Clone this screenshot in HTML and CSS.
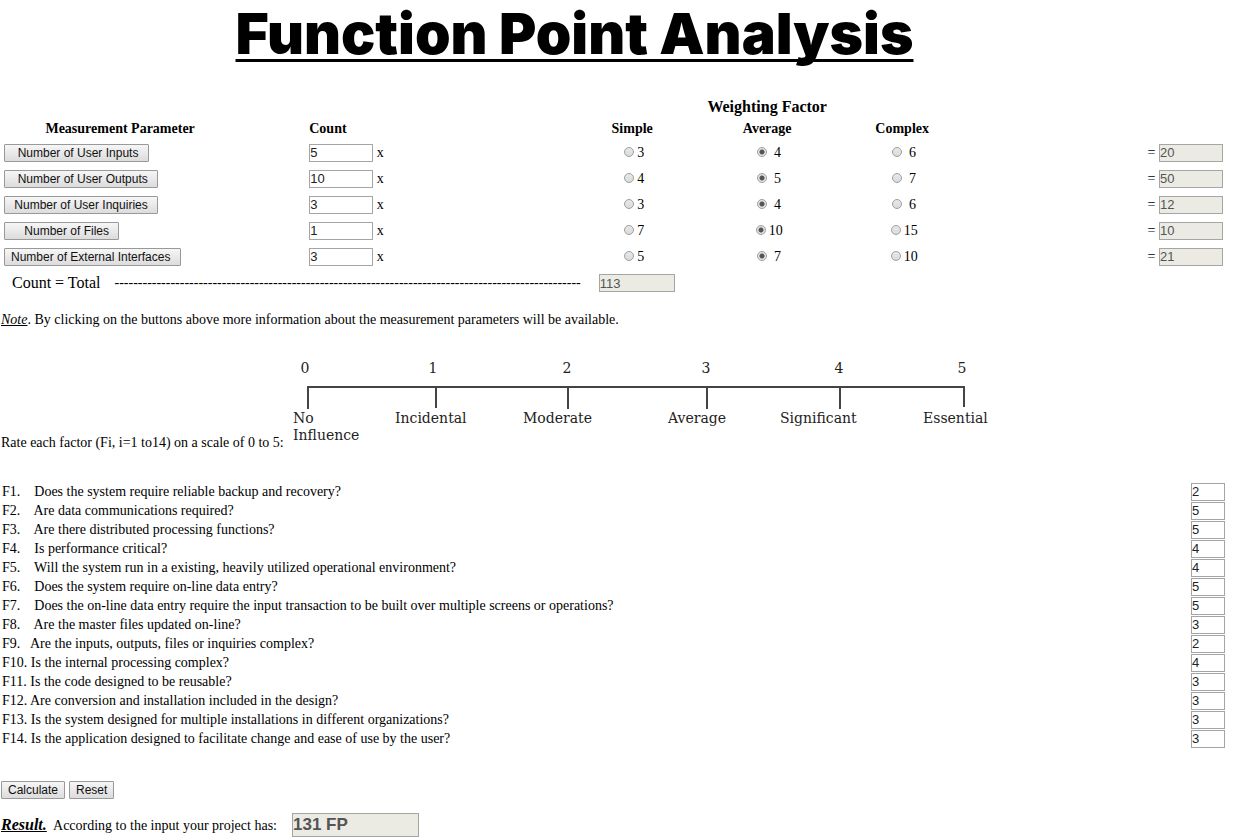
FILE: index.html
```html
<!DOCTYPE html>
<html lang="en">
<head>
<meta charset="utf-8">
<title>Function Point Analysis</title>
<link rel="stylesheet" href="styles.css">
</head>
<body>
<h1 class="title">Function Point Analysis</h1>
<form class="fpa">
<table class="weights">
<colgroup><col class="col-param"><col class="col-count"><col class="col-weight"><col class="col-weight"><col class="col-weight"><col class="col-result"></colgroup>
<thead>
<tr class="group"><td colspan="2"></td><th class="weight" colspan="3" scope="colgroup">Weighting Factor</th><td></td></tr>
<tr><th class="param-head" scope="col">Measurement Parameter</th><th class="count-head" scope="col">Count</th><th class="weight" scope="col">Simple</th><th class="weight" scope="col">Average</th><th class="weight" scope="col">Complex</th><td></td></tr>
</thead>
<tbody>
<tr><td><button type="button">&nbsp;&nbsp;Number of User Inputs&nbsp;</button></td><td class="count"><label><input class="field" type="text" value="5"> x</label></td>
<td class="weight"><label><input type="radio" name="w1">3</label></td><td class="weight"><label><input type="radio" name="w1" checked>&nbsp;4</label></td><td class="weight"><label><input type="radio" name="w1">&nbsp;6</label></td>
<td class="result"><label>= <input class="field" type="text" value="20" disabled></label></td></tr>
<tr><td><button type="button">&nbsp;&nbsp;Number of User Outputs&nbsp;</button></td><td class="count"><label><input class="field" type="text" value="10"> x</label></td>
<td class="weight"><label><input type="radio" name="w2">4</label></td><td class="weight"><label><input type="radio" name="w2" checked>&nbsp;5</label></td><td class="weight"><label><input type="radio" name="w2">&nbsp;7</label></td>
<td class="result"><label>= <input class="field" type="text" value="50" disabled></label></td></tr>
<tr><td><button type="button">&nbsp;Number of User Inquiries&nbsp;</button></td><td class="count"><label><input class="field" type="text" value="3"> x</label></td>
<td class="weight"><label><input type="radio" name="w3">3</label></td><td class="weight"><label><input type="radio" name="w3" checked>&nbsp;4</label></td><td class="weight"><label><input type="radio" name="w3">&nbsp;6</label></td>
<td class="result"><label>= <input class="field" type="text" value="12" disabled></label></td></tr>
<tr><td><button type="button">&nbsp;&nbsp;&nbsp;&nbsp;Number of Files&nbsp;</button></td><td class="count"><label><input class="field" type="text" value="1"> x</label></td>
<td class="weight"><label><input type="radio" name="w4">7</label></td><td class="weight"><label><input type="radio" name="w4" checked>10</label></td><td class="weight"><label><input type="radio" name="w4">15</label></td>
<td class="result"><label>= <input class="field" type="text" value="10" disabled></label></td></tr>
<tr><td><button type="button">Number of External Interfaces&nbsp;</button></td><td class="count"><label><input class="field" type="text" value="3"> x</label></td>
<td class="weight"><label><input type="radio" name="w5">5</label></td><td class="weight"><label><input type="radio" name="w5" checked>&nbsp;7</label></td><td class="weight"><label><input type="radio" name="w5">10</label></td>
<td class="result"><label>= <input class="field" type="text" value="21" disabled></label></td></tr>
</tbody>
</table>
<div class="total"><label for="total">Count = Total</label><span class="dashes">----------------------------------------------------------------------------------------------------</span><input class="field total-field" id="total" type="text" value="113" disabled></div>
<p class="note"><em>Note</em>. By clicking on the buttons above more information about the measurement parameters will be available.</p>
<div class="rate"><span>Rate each factor (Fi, i=1 to14) on a scale of 0 to 5:</span><svg class="scale" width="708" height="96" viewBox="0 0 708 96" role="img" aria-label="Influence scale from 0 to 5">
<path d="M15 37H673M16 36V59M144 37V58M276 37V59M415 37V59M548 37V59M672 37V57" fill="none" stroke="#444" stroke-width="2"/>
<g text-anchor="middle"><text x="13" y="23">0</text><text x="141" y="23">1</text><text x="275" y="23">2</text><text x="414" y="23">3</text><text x="547" y="23">4</text><text x="670" y="23">5</text></g>
<text x="1" y="73">No</text><text x="1" y="90">Influence</text><text x="103" y="73">Incidental</text><text x="231" y="73">Moderate</text><text x="376" y="73">Average</text><text x="488" y="73">Significant</text><text x="631" y="73">Essential</text>
</svg></div>
<div class="factors">
<label>F1.&nbsp;&nbsp;&nbsp; Does the system require reliable backup and recovery?<input class="field" type="text" value="2"></label>
<label>F2.&nbsp;&nbsp;&nbsp; Are data communications required?<input class="field" type="text" value="5"></label>
<label>F3.&nbsp;&nbsp;&nbsp; Are there distributed processing functions?<input class="field" type="text" value="5"></label>
<label>F4.&nbsp;&nbsp;&nbsp; Is performance critical?<input class="field" type="text" value="4"></label>
<label>F5.&nbsp;&nbsp;&nbsp; Will the system run in a existing, heavily utilized operational environment?<input class="field" type="text" value="4"></label>
<label>F6.&nbsp;&nbsp;&nbsp; Does the system require on-line data entry?<input class="field" type="text" value="5"></label>
<label>F7.&nbsp;&nbsp;&nbsp; Does the on-line data entry require the input transaction to be built over multiple screens or operations?<input class="field" type="text" value="5"></label>
<label>F8.&nbsp;&nbsp;&nbsp; Are the master files updated on-line?<input class="field" type="text" value="3"></label>
<label>F9.&nbsp;&nbsp; Are the inputs, outputs, files or inquiries complex?<input class="field" type="text" value="2"></label>
<label>F10. Is the internal processing complex?<input class="field" type="text" value="4"></label>
<label>F11. Is the code designed to be reusable?<input class="field" type="text" value="3"></label>
<label>F12. Are conversion and installation included in the design?<input class="field" type="text" value="3"></label>
<label>F13. Is the system designed for multiple installations in different organizations?<input class="field" type="text" value="3"></label>
<label>F14. Is the application designed to facilitate change and ease of use by the user?<input class="field" type="text" value="3"></label>
</div>
<div class="actions"><button type="button">Calculate</button><button type="reset">Reset</button></div>
<div class="outcome"><label for="outcome"><strong>Result.</strong>&nbsp; According to the input your project has:</label><input class="field outcome-field" id="outcome" type="text" value="131 FP" disabled></div>
</form>
</body>
</html>
```
FILE: styles.css
```css
* { box-sizing: border-box; }
body {
  margin: 0;
  background: #fff;
  color: #000;
  font: 14px/18px "Liberation Serif", "Times New Roman", serif;
}
.title {
  margin: 0;
  padding: 2px 84px 0 0;
  text-align: center;
  font: 900 57px/64px Inter, "Arial Black", sans-serif;
  text-decoration: underline;
  text-decoration-thickness: 3px;
  text-underline-offset: 5px;
  text-decoration-skip-ink: none;
}
.weights {
  width: 100%;
  margin-top: 30px;
  table-layout: fixed;
  border-collapse: collapse;
}
.col-param { width: 25%; }
.col-count { width: 21%; }
.col-weight { width: 135px; }
.weights td, .weights th { padding: 0; height: 22px; }
.weights .group th { font-size: 16px; }
.weights tbody td { height: 26px; white-space: nowrap; }
.weights td:first-child { padding-left: 4px; }
.weights .param-head { padding-right: 68px; }
.weights .count-head { text-align: left; padding-left: 1px; }
.weights .count { padding-left: 1px; }
.weights .weight { text-align: center; padding-right: 5px; }
.weights .result { text-align: right; padding-right: 10px; }
button {
  height: 18px;
  padding: 0 6px;
  border: 1px solid #999;
  border-radius: 1px;
  background: linear-gradient(#f6f6f6, #dcdcdc);
  color: #111;
  font: 12px/16px "Liberation Sans", Arial, sans-serif;
}
.field {
  width: 64px;
  height: 18px;
  padding: 0;
  border: 1px solid #a5a5a5;
  border-radius: 0;
  background: #fff;
  color: #222;
  font: 13px/16px "Liberation Sans", Arial, sans-serif;
}
.field:disabled { background: #ebebe4; color: #545454; }
input[type="radio"] {
  appearance: none;
  width: 10px;
  height: 10px;
  margin: 0 3px 0 4px;
  border: 1px solid #a0a0a0;
  border-radius: 50%;
  background: linear-gradient(#e8e8e8, #dadada);
}
input[type="radio"]:checked {
  background: radial-gradient(circle, #555 2px, #e2e2e2 3px);
}
.total {
  display: flex;
  align-items: center;
  padding-left: 12px;
  height: 26px;
  font-size: 16px;
}
.dashes { margin: 0 18px 0 14px; font-size: 14px; }
.total-field { width: 76px; }
.note { margin: 15px 0 0 1px; }
.note em { text-decoration: underline; }
.rate { display: flex; align-items: flex-end; gap: 8px; margin: 21px 0 0 1px; white-space: nowrap; }
.scale { flex: none; overflow: visible; margin-bottom: 6px; font: 14px "DejaVu Serif", serif; fill: #222; }
.factors { padding: 30px 8px 0 2px; }
.factors label { display: flex; justify-content: space-between; align-items: center; height: 19px; }
.factors .field { width: 34px; }
.actions { display: flex; gap: 4px; padding: 33px 0 0 1px; }
.outcome { display: flex; align-items: center; gap: 15px; padding: 14px 0 0 1px; }
.outcome strong { font-size: 16px; font-style: italic; text-decoration: underline; }
.outcome-field { width: 127px; height: 24px; font-size: 17px; font-weight: bold; }
```
